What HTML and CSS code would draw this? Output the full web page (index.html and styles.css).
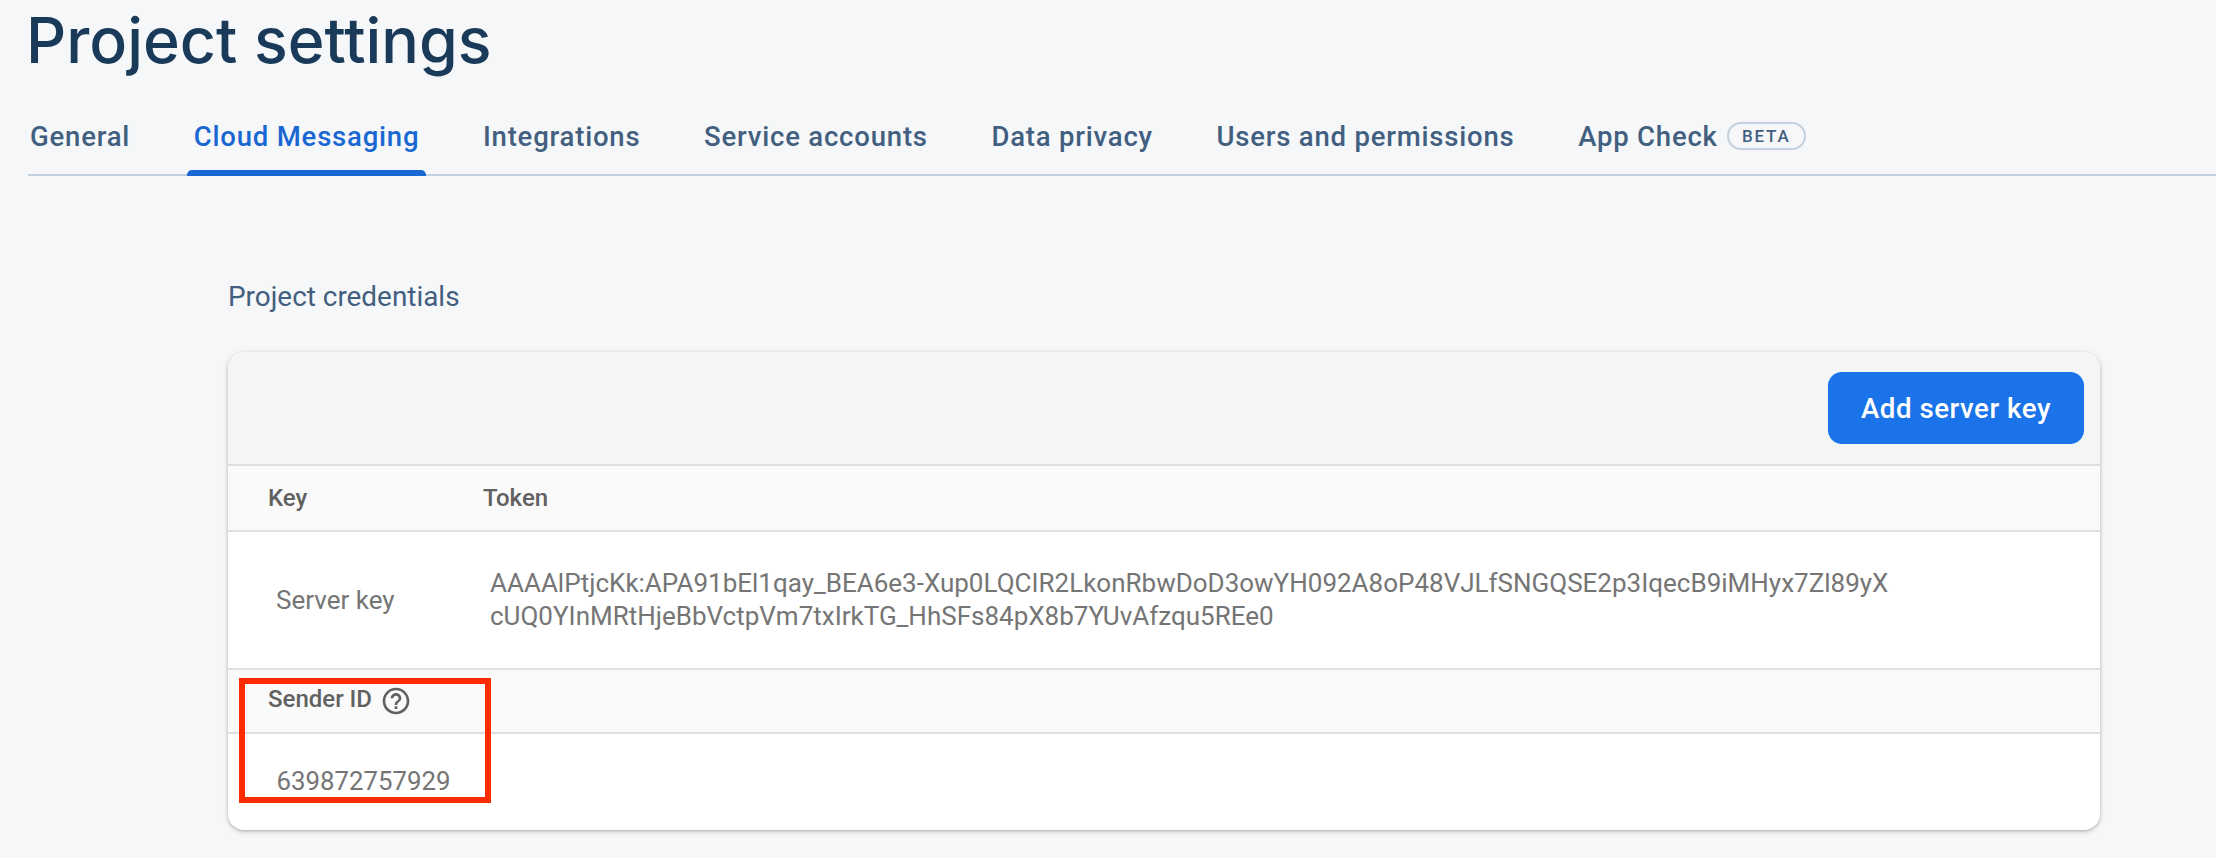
FILE: index.html
```html
<!DOCTYPE html>
<html lang="en">
<head>
<meta charset="utf-8">
<title>Project settings</title>
<link rel="stylesheet" href="styles.css">
</head>
<body>
<main class="page">
  <h1 class="title">Project settings</h1>
  <nav class="tabs">
    <a class="tab tab-first">General</a>
    <a class="tab tab-active">Cloud Messaging</a>
    <a class="tab">Integrations</a>
    <a class="tab">Service accounts</a>
    <a class="tab">Data privacy</a>
    <a class="tab">Users and permissions</a>
    <a class="tab">App Check<span class="chip">BETA</span></a>
  </nav>
  <section class="content">
    <h2 class="section-title">Project credentials</h2>
    <div class="card">
      <div class="toolbar"><button class="btn">Add server key</button></div>
      <div class="head-row key-grid">
        <div class="head-key">Key</div>
        <div>Token</div>
      </div>
      <div class="data-row key-grid">
        <div class="cell-key">Server key</div>
        <div class="cell-token">AAAAlPtjcKk:APA91bEl1qay_BEA6e3-Xup0LQCIR2LkonRbwDoD3owYH092A8oP48VJLfSNGQSE2p3IqecB9iMHyx7Zl89yX<br>cUQ0YInMRtHjeBbVctpVm7txIrkTG_HhSFs84pX8b7YUvAfzqu5REe0</div>
      </div>
      <div class="head-row sender-head">
        <span>Sender ID</span>
        <svg class="help" viewBox="0 0 24 24" aria-hidden="true"><path d="M11 18h2v-2h-2v2zm1-16C6.48 2 2 6.48 2 12s4.48 10 10 10 10-4.48 10-10S17.52 2 12 2zm0 18c-4.41 0-8-3.59-8-8s3.59-8 8-8 8 3.59 8 8-3.59 8-8 8zm0-14c-2.21 0-4 1.79-4 4h2c0-1.1.9-2 2-2s2 .9 2 2c0 2-3 1.75-3 5h2c0-2.25 3-2.5 3-5 0-2.21-1.79-4-4-4z"/></svg>
      </div>
      <div class="sender-row">639872757929</div>
      <div class="highlight"></div>
    </div>
  </section>
</main>
</body>
</html>
```

FILE: styles.css
```css
* { box-sizing: border-box; }
html, body { margin: 0; height: 100%; }
body {
  background: #f6f7f9;
  font-family: Roboto, "Liberation Sans", sans-serif;
  overflow: hidden;
}
.page { padding: 0 0 0 28px; }
.title {
  margin: 0 0 0 -2px;
  padding-top: 4px;
  height: 100px;
  font-family: Inter, Roboto, sans-serif;
  font-size: 62.7px;
  line-height: 72px;
  font-weight: 500;
  color: #1a3a5a;
}
.tabs {
  display: flex;
  height: 76px;
  border-bottom: 2px solid #c3d0df;
  gap: 49.6px;
}
.tab {
  position: relative;
  display: flex;
  align-items: center;
  height: 74px;
  padding: 0 7px 2px;
  font-size: 27.5px;
  font-weight: 500;
  letter-spacing: 0.8px;
  color: #425f80;
  white-space: nowrap;
}
.tab-first { margin-left: -5px; }
.tab-active { color: #1967d2; }
.tab-active::after {
  content: "";
  position: absolute;
  left: 0;
  right: 0;
  bottom: -2px;
  height: 6px;
  background: #1967d2;
  border-radius: 5px 5px 0 0;
}
.chip {
  margin-left: 9px;
  width: 79px;
  height: 28px;
  display: inline-flex;
  align-items: center;
  justify-content: center;
  border: 2px solid #c3d0df;
  border-radius: 14px;
  font-size: 17px;
  letter-spacing: 1.8px;
}
.content { padding: 0 116px 0 200px; }
.section-title {
  margin: 0;
  padding-top: 103px;
  height: 176px;
  font-size: 27.9px;
  line-height: 36px;
  font-weight: 400;
  color: #425f80;
}
.card {
  position: relative;
  width: 1872px;
  height: 478px;
  background: #fff;
  border-radius: 16px;
  overflow: visible;
  box-shadow: 0 1px 3px rgba(60, 64, 67, .3), 0 2px 6px rgba(60, 64, 67, .15);
}
.toolbar {
  display: flex;
  justify-content: flex-end;
  align-items: flex-start;
  height: 114px;
  padding: 20px 16px 0 0;
  background: #f5f5f5;
  border-bottom: 2px solid #e0e0e0;
  border-radius: 16px 16px 0 0;
}
.btn {
  width: 256px;
  height: 72px;
  border: 0;
  border-radius: 14px;
  background: #1a73e8;
  color: #fff;
  font: 500 27.7px Roboto, sans-serif;
  letter-spacing: .5px;
}
.head-row {
  background: #fafafa;
  border-bottom: 2px solid #e0e0e0;
  font-size: 24px;
  font-weight: 500;
  color: #616161;
}
.key-grid {
  display: grid;
  grid-template-columns: 255px 1fr;
  padding-left: 0;
}
.key-grid.head-row {
  height: 66px;
  align-items: center;
  padding-left: 12px;
}
.head-key { padding-left: 28px; }
.key-grid.head-row > div:last-child { margin-left: -12px; }
.data-row {
  height: 138px;
  align-items: center;
  border-bottom: 2px solid #e0e0e0;
  font-size: 26px;
  color: #757575;
  line-height: 33px;
}
.data-row .cell-key { padding-left: 48px; }
.cell-token { margin-left: 7px; white-space: nowrap; }
.sender-head {
  display: flex;
  align-items: flex-start;
  gap: 8px;
  height: 64px;
  padding: 15px 0 0 40px;
  line-height: 28px;
}
.help { width: 32px; height: 32px; fill: #616161; }
.sender-row {
  padding: 30px 0 0 48.5px;
  font-size: 25.8px;
  line-height: 34px;
  color: #757575;
}
.highlight {
  position: absolute;
  left: 11px;
  top: 326px;
  width: 252px;
  height: 125px;
  border: 6px solid #ff2a00;
}
```
